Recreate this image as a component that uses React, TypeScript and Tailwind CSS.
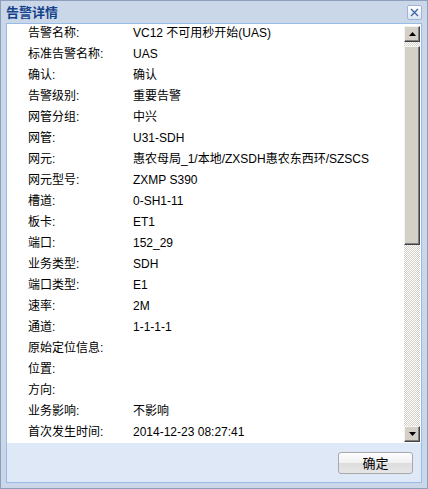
import React from 'react';

type Row = { label: string; value: string };

const rows: Row[] = [
  { label: '告警名称:', value: 'VC12 不可用秒开始(UAS)' },
  { label: '标准告警名称:', value: 'UAS' },
  { label: '确认:', value: '确认' },
  { label: '告警级别:', value: '重要告警' },
  { label: '网管分组:', value: '中兴' },
  { label: '网管:', value: 'U31-SDH' },
  { label: '网元:', value: '惠农母局_1/本地/ZXSDH惠农东西环/SZSCS' },
  { label: '网元型号:', value: 'ZXMP S390' },
  { label: '槽道:', value: '0-SH1-11' },
  { label: '板卡:', value: 'ET1' },
  { label: '端口:', value: '152_29' },
  { label: '业务类型:', value: 'SDH' },
  { label: '端口类型:', value: 'E1' },
  { label: '速率:', value: '2M' },
  { label: '通道:', value: '1-1-1-1' },
  { label: '原始定位信息:', value: '' },
  { label: '位置:', value: '' },
  { label: '方向:', value: '' },
  { label: '业务影响:', value: '不影响' },
  { label: '首次发生时间:', value: '2014-12-23 08:27:41' },
];

function ArrowButton({ down }: { down?: boolean }) {
  return (
    <div className="h-[16px] w-[16px] flex items-center justify-center bg-[#d4d0c8] border border-[#f4f3f0] border-r-[#404040] border-b-[#404040] shadow-[inset_-1px_-1px_0_#808080]">
      <svg width="7" height="4" viewBox="0 0 7 4">
        {down ? <polygon points="0,0 7,0 3.5,4" fill="#000" /> : <polygon points="0,4 7,4 3.5,0" fill="#000" />}
      </svg>
    </div>
  );
}

export default function App() {
  return (
    <div className="w-[428px] h-[489px] flex flex-col bg-[#c9d7e9] border border-[#8d9fba] font-['Liberation_Sans','Noto_Sans_CJK_SC',sans-serif] text-[12px] text-black">
      {/* title bar */}
      <div className="h-[22px] flex items-center justify-between pl-[5px] pr-[5px]">
        <span className="text-[13px] font-bold text-[#15428b] leading-none">告警详情</span>
        <div className="w-[15px] h-[15px] flex items-center justify-center rounded-[2px] border border-[#9fb4d6] bg-[linear-gradient(#ffffff,#dce6f3)]">
          <svg width="9" height="9" viewBox="0 0 9 9">
            <path d="M1 1 L8 8 M8 1 L1 8" stroke="#3d62a6" strokeWidth="1.3" />
          </svg>
        </div>
      </div>

      {/* body */}
      <div className="flex-1 mx-[5px] mb-[5px] flex flex-col border border-[#99bbe8] bg-[#dfe8f6]">
        <div className="h-[419px] flex bg-white">
          <div className="flex-1 overflow-hidden pl-[21px] -mt-px">
            {rows.map((r) => (
              <div key={r.label} className="flex h-[21px] leading-[21px] whitespace-nowrap">
                <div className="w-[105px] shrink-0">{r.label}</div>
                <div>{r.value}</div>
              </div>
            ))}
          </div>

          {/* scrollbar */}
          <div className="w-[16px] mr-[1px] pt-[2px] pb-[1px] flex flex-col">
            <ArrowButton />
            <div className="flex-1 flex flex-col bg-[image:repeating-conic-gradient(#d4d0c8_0_25%,#ffffff_0_50%)] bg-size-[2px_2px]">
              <div className="mt-[4px] h-[199px] bg-[#d4d0c8] border border-[#f4f3f0] border-r-[#404040] border-b-[#404040] shadow-[inset_-1px_-1px_0_#808080]" />
            </div>
            <ArrowButton down />
          </div>
        </div>

        <div className="flex justify-end pt-[9px] pr-[8px]">
          <button className="w-[75px] h-[22px] rounded-[3px] border border-[#a9a9a9] bg-[linear-gradient(#fdfdfd_0%,#f1f1f1_50%,#dddddd_51%,#e6e6e6_100%)] text-[13px] leading-none text-black">
            确定
          </button>
        </div>
      </div>
    </div>
  );
}
